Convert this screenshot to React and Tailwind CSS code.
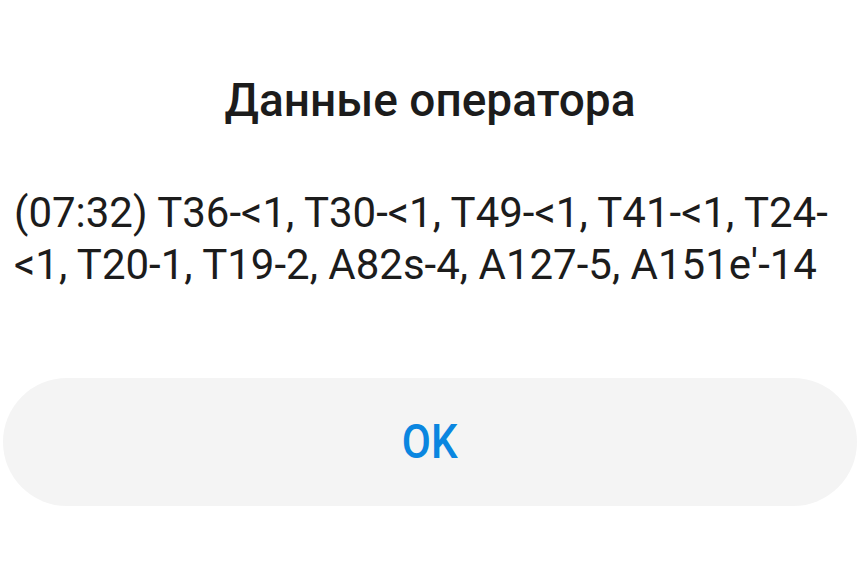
export default function App() {
  return (
    <div className="w-[860px] h-[573px] bg-white overflow-hidden flex flex-col" style={{ fontFamily: 'Roboto, "Noto Sans", sans-serif' }}>
      <h1 className="mt-[72px] text-center text-[46px] leading-[56px] font-medium text-[#1c1c1c]">
        Данные оператора
      </h1>
      <p className="mt-[59px] px-[14px] text-[42px] leading-[52px] text-[#1c1c1c] whitespace-nowrap">
        (07:32) T36-&lt;1, T30-&lt;1, T49-&lt;1, T41-&lt;1, T24-
        <br />
        &lt;1, T20-1, T19-2, A82s-4, A127-5, A151e'-14
      </p>
      <div className="mt-[87px] px-[3px]">
        <button className="w-full h-[128px] rounded-full bg-[#f4f4f4] flex items-center justify-center text-[#0a86e0]">
          <span className="inline-block text-[48px] font-medium scale-x-[0.88]">OK</span>
        </button>
      </div>
    </div>
  );
}
